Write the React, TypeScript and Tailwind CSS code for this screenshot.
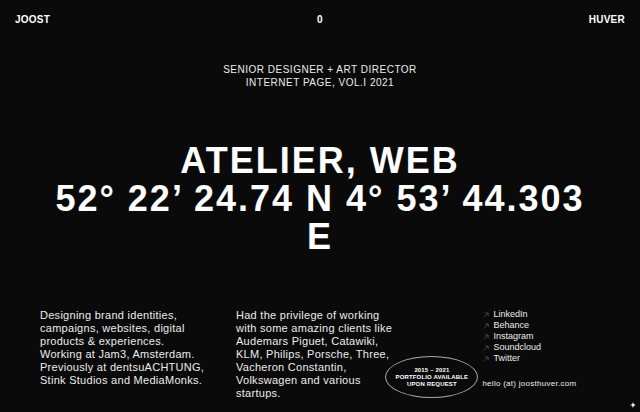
const links = ["LinkedIn", "Behance", "Instagram", "Soundcloud", "Twitter"];

function ArrowIcon() {
  return (
    <svg viewBox="0 0 8 8" className="size-2 text-[#5c5c5c]" fill="none" stroke="currentColor" strokeWidth="0.7" aria-hidden="true">
      <path d="M2 6.2 6.2 2M3 2h3.2v3.2" />
    </svg>
  );
}

export default function App() {
  return (
    <div className="flex min-h-screen flex-col bg-[#0a0a0a] font-['Liberation_Sans',Arial,sans-serif] text-[10px] leading-[13px] text-[#ececec]">
      <header className="grid grid-cols-3 px-[15px] pt-[13px] font-bold tracking-wide text-white">
        <a href="#joost">JOOST</a>
        <span className="text-center">0</span>
        <a href="#huver" className="text-right">HUVER</a>
      </header>

      <main className="flex grow flex-col">
        <p className="pt-[37px] text-center tracking-wider">
          SENIOR DESIGNER + ART DIRECTOR
          <br />
          INTERNET PAGE, VOL.I 2021
        </p>
        <h1 className="mt-[53px] px-10 text-center text-4xl leading-[38px] font-bold tracking-[2px] text-white">
          ATELIER, WEB
          <br />
          52° 22’ 24.74 N 4° 53’ 44.303 E
        </h1>
      </main>

      <footer className="flex px-10 pb-3 text-[11px] tracking-wide">
        <p className="w-[35%] pr-6">
          Designing brand identities, campaigns, websites, digital products &amp; experiences.
          <br />
          Working at Jam3, Amsterdam. Previously at dentsuACHTUNG, Stink Studios and MediaMonks.
        </p>
        <div className="relative w-[44%]">
          <p className="w-40">
            Had the privilege of working with some amazing clients like Audemars Piguet, Catawiki, KLM, Philips, Porsche, Three, Vacheron Constantin, Volkswagen and various startups.
          </p>
          <button
            type="button"
            className="absolute right-1 bottom-0.5 flex h-[42px] w-[93px] items-center justify-center rounded-[50%] border border-[#aaaaaa] text-[6px] leading-[7px] font-bold tracking-wide whitespace-nowrap text-white"
          >
            <span>
              2015 – 2021
              <br />
              PORTFOLIO AVAILABLE
              <br />
              UPON REQUEST
            </span>
          </button>
        </div>
        <div className="flex flex-col text-[8px] leading-[11px]">
          <ul className="text-[9px] tracking-normal">
            {links.map((name) => (
              <li key={name}>
                <a href={"#" + name.toLowerCase()} className="flex items-center gap-[3px]">
                  <ArrowIcon />
                  {name}
                </a>
              </li>
            ))}
          </ul>
          <a href="#contact" className="mt-3.5 whitespace-nowrap">
            hello (at) joosthuver.com
          </a>
        </div>
      </footer>

      <svg viewBox="0 0 6 6" className="fixed right-1 bottom-1 size-1.5" aria-hidden="true">
        <path d="M3 0 3.8 2.2 6 3 3.8 3.8 3 6 2.2 3.8 0 3 2.2 2.2Z" fill="#fff" />
      </svg>
    </div>
  );
}
